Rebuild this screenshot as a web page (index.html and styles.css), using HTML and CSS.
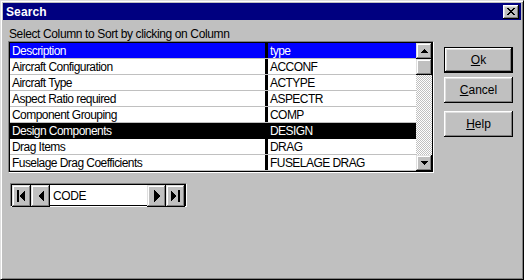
FILE: index.html
```html
<!DOCTYPE html>
<html>
<head>
<meta charset="utf-8">
<title>Search</title>
<link rel="stylesheet" href="styles.css">
</head>
<body>
<div class="window">
  <div class="titlebar">
    <span class="title">Search</span>
    <div class="close">
      <svg width="8" height="7" viewBox="0 0 8 7" shape-rendering="crispEdges"><path d="M0 0h2l2 2.5 2-2.5h2l-3 3.5 3 3.5h-2l-2-2.5-2 2.5h-2l3-3.5z" fill="#000"/></svg>
    </div>
  </div>
  <div class="content">
    <div class="left">
      <div class="label">Select Column to Sort by clicking on Column</div>
      <div class="grid">
        <div class="rows">
          <div class="row hl"><div class="c1">Description</div><div class="c2">type</div></div>
          <div class="row"><div class="c1">Aircraft Configuration</div><div class="c2">ACCONF</div></div>
          <div class="row"><div class="c1">Aircraft Type</div><div class="c2">ACTYPE</div></div>
          <div class="row"><div class="c1">Aspect Ratio required</div><div class="c2">ASPECTR</div></div>
          <div class="row"><div class="c1">Component Grouping</div><div class="c2">COMP</div></div>
          <div class="row sel"><div class="c1">Design Components</div><div class="c2">DESIGN</div></div>
          <div class="row"><div class="c1">Drag Items</div><div class="c2">DRAG</div></div>
          <div class="row"><div class="c1">Fuselage Drag Coefficients</div><div class="c2">FUSELAGE DRAG</div></div>
        </div>
        <div class="vscroll">
          <div class="sbtn"><svg width="7" height="4" viewBox="0 0 7 4" shape-rendering="crispEdges"><path d="M3 0h1v1h1v1h1v1h1v1H0V3h1V2h1V1h1z"/></svg></div>
          <div class="thumb"></div>
          <div class="track"></div>
          <div class="sbtn"><svg width="7" height="4" viewBox="0 0 7 4" shape-rendering="crispEdges"><path d="M0 0h7v1H6v1H5v1H4v1H3V3H2V2H1V1H0z"/></svg></div>
        </div>
      </div>
      <div class="nav">
        <div class="nbtn"><svg width="9" height="12" viewBox="0 0 9 12" shape-rendering="crispEdges"><path d="M0 0h2v12H0zM8 0v12L3 6z"/></svg></div>
        <div class="nbtn"><svg width="6" height="12" viewBox="0 0 6 12" shape-rendering="crispEdges"><path d="M6 0v12L0 6z"/></svg></div>
        <div class="field">CODE</div>
        <div class="nbtn"><svg width="6" height="12" viewBox="0 0 6 12" shape-rendering="crispEdges"><path d="M0 0v12L6 6z"/></svg></div>
        <div class="nbtn"><svg width="9" height="12" viewBox="0 0 9 12" shape-rendering="crispEdges"><path d="M0 0v12L5 6zM7 0h2v12H7z"/></svg></div>
      </div>
    </div>
    <div class="buttons">
      <div class="btn default"><span><u>O</u>k</span></div>
      <div class="btn"><span><u>C</u>ancel</span></div>
      <div class="btn help"><span><u>H</u>elp</span></div>
    </div>
  </div>
</div>
</body>
</html>
```

FILE: styles.css
```css
* { box-sizing: border-box; }
html, body {
  margin: 0;
  padding: 0;
  background: #c0c0c0;
}
body {
  font-family: "Liberation Sans", Arial, sans-serif;
  font-size: 12px;
  color: #000;
}
.window {
  width: 524px;
  height: 280px;
  background: #c0c0c0;
  border: 1px solid;
  border-color: #dfdfdf #000 #000 #dfdfdf;
  box-shadow: inset 1px 1px #fff, inset -1px -1px #808080;
  padding: 2px;
  display: flex;
  flex-direction: column;
}
.titlebar {
  height: 17px;
  background: #000080;
  display: flex;
  align-items: center;
  justify-content: space-between;
  padding: 0 2px 0 3px;
}
.title {
  color: #fff;
  font-weight: bold;
  font-size: 12px;
  letter-spacing: 0.1px;
}
.close {
  width: 16px;
  height: 14px;
  background: #c0c0c0;
  box-shadow: inset -1px -1px #000, inset 1px 1px #fff, inset -2px -2px #808080, inset 2px 2px #dfdfdf;
  display: flex;
  align-items: center;
  justify-content: center;
  padding-bottom: 1px;
}
.content {
  flex: 1;
  display: flex;
  padding: 7px 8px 0 5px;
}
.left {
  display: flex;
  flex-direction: column;
}
.label {
  height: 14px;
  line-height: 14px;
  padding-left: 1px;
  letter-spacing: -0.38px;
}
.grid {
  width: 426px;
  height: 132px;
  border: 1px solid;
  border-color: #808080 #fff #fff #808080;
  box-shadow: inset 1px 1px #000, inset -1px -1px #000;
  padding: 1px;
  display: flex;
  background: #fff;
}
.rows {
  width: 406px;
  display: flex;
  flex-direction: column;
}
.row {
  height: 16px;
  display: flex;
  border-bottom: 1px solid #c0c0c0;
  line-height: 16px;
  letter-spacing: -0.55px;
}
.c1 {
  width: 258px;
  border-right: 3px solid #000;
  padding-left: 2px;
  white-space: nowrap;
  overflow: hidden;
}
.c2 {
  width: 148px;
  padding-left: 2px;
  white-space: nowrap;
  overflow: hidden;
}
.row.hl .c1, .row.hl .c2 {
  background: #0000ff;
  color: #fff;
}
.row.sel {
  background: #000;
  color: #fff;
  border-bottom-color: #000;
}
.vscroll {
  width: 16px;
  display: flex;
  flex-direction: column;
}
.sbtn, .thumb {
  height: 16px;
  background: #c0c0c0;
  box-shadow: inset -1px -1px #000, inset 1px 1px #dfdfdf, inset -2px -2px #808080, inset 2px 2px #fff;
  display: flex;
  align-items: center;
  justify-content: center;
}
.track {
  flex: 1;
  background: repeating-conic-gradient(#c0c0c0 0 25%, #fff 0 50%) 0 0 / 2px 2px;
}
.nav {
  margin: 10px 0 0 2px;
  width: 177px;
  height: 24px;
  border: 1px solid;
  border-color: #808080 #fff #fff #808080;
  box-shadow: inset 1px 1px #000, inset -1px -1px #000;
  padding: 1px;
  display: flex;
  background: #fff;
}
.nbtn {
  width: 19px;
  height: 22px;
  background: #c0c0c0;
  box-shadow: inset -1px -1px #000, inset 1px 1px #dfdfdf, inset -2px -2px #808080, inset 2px 2px #fff;
  display: flex;
  align-items: center;
  justify-content: center;
}
.field {
  flex: 1;
  background: #fff;
  line-height: 22px;
  padding-left: 3px;
  letter-spacing: -0.4px;
}
.buttons {
  margin-left: auto;
  margin-top: 20px;
  display: flex;
  flex-direction: column;
  gap: 4px;
}
.btn {
  width: 69px;
  height: 26px;
  background: #c0c0c0;
  box-shadow: inset -1px -1px #000, inset 1px 1px #fff, inset -2px -2px #808080, inset 2px 2px #dfdfdf;
  display: flex;
  align-items: center;
  justify-content: center;
}
.btn.default {
  border: 1px solid #000;
}
.btn.help {
  margin-top: 4px;
}
```
